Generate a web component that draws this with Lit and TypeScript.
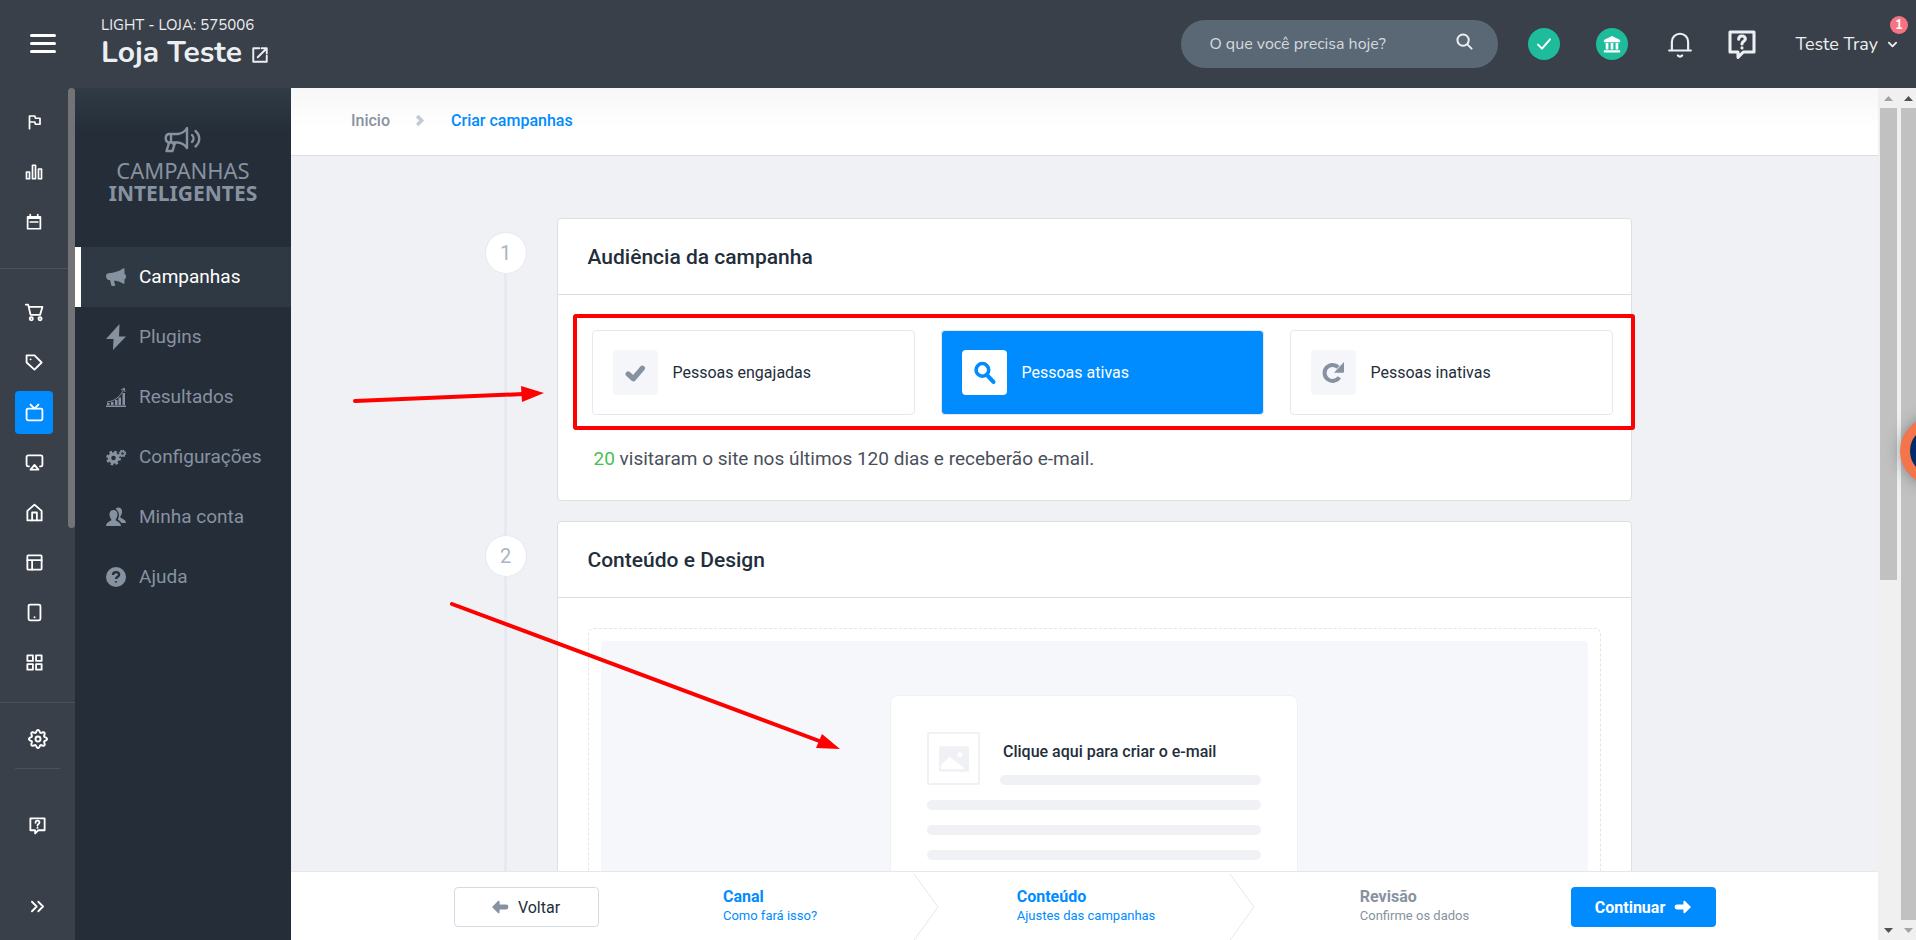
import { LitElement, html, svg, css, nothing, TemplateResult, SVGTemplateResult } from "lit";
import { customElement, property, state } from "lit/decorators.js";
import { classMap } from "lit/directives/class-map.js";

type Glyph = SVGTemplateResult;

// Outline of an eight-lobed cog, sampled around the centre of a 24-unit box.
const cog = Array.from({ length: 96 }, (_, i) => {
  const a = (i / 96) * Math.PI * 2;
  const r = 9.4 + 1.5 * Math.cos(8 * a);
  return `${(12 + r * Math.cos(a)).toFixed(2)},${(12 + r * Math.sin(a)).toFixed(2)}`;
}).join(" ");

const line: Record<string, Glyph> = {
  flag: svg`<path d="M6 21V4h7l1 3h6v8h-6l-1-3H6"/>`,
  chart: svg`<path d="M2 12h4v9H2zM10 3h4v18h-4zM18 8h4v13h-4z"/>`,
  calendar: svg`<path d="M3.500 5h17v16h-17zM4 7h16M7 2v3M17 2v3M7 12h10"/>`,
  cart: svg`<path d="M1 2h3l3 13h12l3-10H5"/><circle cx="8" cy="20" r="2"/><circle cx="19" cy="20" r="2"/>`,
  tag: svg`<path d="M2 3v9l10 9 9-9L12 3z"/><path d="M7 8h.1"/>`,
  tv: svg`<rect x="2" y="7" width="20" height="15" rx="2"/><path d="M7 2l5 5 5-5"/>`,
  airplay: svg`<path d="M5 17H4a2 2 0 0 1-2-2V5a2 2 0 0 1 2-2h16a2 2 0 0 1 2 2v10a2 2 0 0 1-2 2h-1"/><path d="M12 15l5 6H7z"/>`,
  home: svg`<path d="M3 10l9-8 9 8v12H3z"/><path d="M9 22V12h6v10"/>`,
  layout: svg`<rect x="3" y="3" width="18" height="18" rx="1"/><path d="M3 9h18M9 9v12"/>`,
  tablet: svg`<rect x="4.500" y="2" width="15" height="20" rx="2"/><path d="M12 18h.1"/>`,
  grid: svg`<path d="M3 3h7v7H3zM14 3h7v7h-7zM14 14h7v7h-7zM3 14h7v7H3z"/>`,
  gear: svg`<polygon points=${cog}/><circle cx="12" cy="12" r="3"/>`,
  help: svg`<path d="M3 3h18v15h-8l-4 4v-4H3z"/><path d="M9.500 8.500c0-3.500 5-3.200 5-.3 0 1.800-2.500 1.800-2.500 3.800M12 14.800v.2"/>`,
  expand: svg`<path d="M5 6l6 6-6 6M13 6l6 6-6 6"/>`,
  down: svg`<path d="M4 8l8 8 8-8"/>`,
  external: svg`<path d="M11 3H3v18h18v-8M14 3h7v7M21 3L9 15"/>`,
  search: svg`<circle cx="10" cy="10" r="8"/><path d="M16 16l6 6"/>`,
  bell: svg`<path d="M2 18h20M4.500 18V10a7.500 7.500 0 0 1 15 0v8"/><path d="M10 22.500c1 1.500 3 1.500 4 0"/>`,
  check: svg`<path d="M3 13l6 6L21 5"/>`,
};

const solid: Record<string, Glyph> = {
  megaphone: svg`<path d="M0 9c0-1.500 1-2.500 2.500-2.700C8 5.600 13 4.500 17 1.500c1-.7 1.500-.3 1.500.6V7c2 .3 2 5 0 5.300v3.500c0 .9-.6 1.300-1.500.7-2.500-1.600-5.500-2.600-8.500-3l-.3 1.500.9 2.800c.2.700-.2 1.300-.9 1.300H6.500c-.6 0-1-.3-1.200-.9L4 13H2.500C1 12.800 0 10.500 0 9z"/>`,
  bolt: svg`<path d="M13.500-3L0 12h7.500L7 23l13-13.500h-7z"/>`,
  results: svg`<path d="M0 18.500h20V20H0zM1 16h2.500v2H1zM5 15h2.500v3H5zM9 13h2.500v5H9zM12.500 10.500H15V18h-2.500zM16.500 6H19v12h-2.500z"/><path d="M1 15c8-1 13-5 17-13M15 3l3.200-2L19 5" fill="none" stroke="currentColor"/>`,
  gears: svg`<circle cx="7.500" cy="11" r="4" fill="none" stroke="currentColor" stroke-width="3.500"/><circle cx="7.500" cy="11" r="6.200" fill="none" stroke="currentColor" stroke-width="2.400" stroke-dasharray="2.600 2.270"/><circle cx="16.500" cy="6.500" r="2.100" fill="none" stroke="currentColor" stroke-width="1.600"/><circle cx="16.500" cy="6.500" r="3.200" fill="none" stroke="currentColor" stroke-width="1.200" stroke-dasharray="1.400 1.110"/>`,
  users: svg`<path d="M7.500 3c2.800 0 4.300 2 4 5-.1 1.500-.8 3-1.700 4v1.500c1.800 1 4.700 1.800 5.200 5.500H0c.4-3.700 3.400-4.500 5.200-5.500V12C4.300 11 3.600 9.500 3.500 8c-.3-3 1.200-5 4-5z"/><path d="M9.500 1.800C13-1 16.500 1 16 5.500c-.2 1.600-.8 2.700-1.600 3.600v1.700c2 1 5.200 1.700 5.600 5.200h-4.500c-.8-1.600-2.200-2.500-3.700-3.200 1.700-3.500 2-7.500-2.300-11z"/>`,
  question: svg`<circle cx="10" cy="10" r="10"/><path d="M7 8c0-4 6.200-3.700 6.200-.4 0 2.200-3.200 2.200-3.200 4.400M10 14.200v1.400" fill="none" stroke="#242d38" stroke-width="2.300"/>`,
  tick: svg`<path d="M3 11.500l5 4.500 8.500-10" fill="none" stroke="currentColor" stroke-width="5" stroke-linecap="round" stroke-linejoin="round"/>`,
  lens: svg`<circle cx="8" cy="7.500" r="6" fill="none" stroke="currentColor" stroke-width="3.400"/><path d="M12.500 12.500l6 6.500" stroke="currentColor" stroke-width="4" stroke-linecap="round"/>`,
  redo: svg`<path d="M15.500 14.500A7.600 7.600 0 1 1 14.500 5" fill="none" stroke="currentColor" stroke-width="3.800"/><path d="M20 0v9.500c0 .5-.3.800-.8.800H10.500z"/>`,
  left: svg`<path d="M0 10l7.500-7.500c1-.7 2 0 2 1V7h8a3 3 0 0 1 0 6h-8v3.500c0 1-1 1.700-2 1z"/>`,
  right: svg`<path d="M20 10l-7.500-7.500c-1-.7-2 0-2 1V7h-8a3 3 0 0 0 0 6h8v3.500c0 1 1 1.700 2 1z"/>`,
  chevron: svg`<path d="M4 2l8 8-8 8" fill="none" stroke="currentColor" stroke-width="6.500"/>`,
  image: svg`<path fill-rule="evenodd" d="M1 1.500h18a1 1 0 0 1 1 1v15a1 1 0 0 1-1 1H1a1 1 0 0 1-1-1v-15a1 1 0 0 1 1-1zM14 5.500a1.700 1.700 0 1 0 .1 0zM1.500 16.800h15v-1L7 8.500 1.500 14z"/>`,
  bank: svg`<path d="M10 1l9 4.500V8H1V5.500zM3 9h3v7H3zM8.500 9h3v7h-3zM14 9h3v7h-3zM1 17h18v2.500H1z"/>`,
};

@customElement("ui-icon")
class UiIcon extends LitElement {
  @property() name = "";
  @property({ type: Number }) size = 20;
  @property({ type: Number }) weight = 2;

  static styles = css`
    :host { display: inline-flex; flex: none; }
    svg { display: block; overflow: visible; }
  `;

  render() {
    const outlined = this.name in line;
    return outlined
      ? html`<svg aria-hidden="true" width=${this.size} height=${this.size} viewBox="0 0 24 24" fill="none"
          stroke="currentColor" stroke-width=${this.weight} stroke-linejoin="round" stroke-linecap="round">${line[this.name]}</svg>`
      : html`<svg aria-hidden="true" width=${this.size} height=${this.size} viewBox="0 0 20 20"
          fill="currentColor">${solid[this.name]}</svg>`;
  }
}

@customElement("top-bar")
class TopBar extends LitElement {
  static styles = css`
    :host {
      display: flex; align-items: center; height: 88px; flex: none;
      background: #394049; color: #eceff2;
      font-family: Nunito, "Open Sans", sans-serif;
    }
    button { border: 0; padding: 0; background: none; color: inherit; font: inherit; cursor: pointer; }
    a { color: inherit; text-decoration: none; }
    .burger { display: grid; gap: 5px; width: 26px; margin: 0 44px 2px 30px; }
    .burger span { height: 3px; border-radius: 2px; background: #fff; }
    .plan { font-size: 15px; line-height: 20px; }
    .store { display: flex; align-items: center; gap: 9px; font-size: 30px; line-height: 36px; font-weight: 700; }
    .store ui-icon { padding-top: 4px; }
    .id { flex: 1; padding-left: 1px; margin-top: -2px; }
    .search {
      display: flex; align-items: center; width: 317px; height: 48px; box-sizing: border-box;
      padding: 0 25px 0 28px; border-radius: 24px; background: #5a6876; margin-right: 30px;
    }
    .search input {
      flex: 1; min-width: 0; border: 0; outline: 0; padding: 0; background: none;
      color: #d5dade; font: 16px Nunito, "Open Sans", sans-serif;
    }
    .search input::placeholder { color: #d5dade; opacity: 1; }
    .dot {
      display: flex; align-items: center; justify-content: center; width: 32px; height: 32px;
      border-radius: 50%; background: #1fbc9c; color: #fff;
    }
    .dot + .dot { margin-left: 36px; }
    .bell { display: flex; margin-left: 39px; }
    .talk { display: flex; margin-left: 33px; }
    .user {
      display: flex; align-items: center; gap: 9px; position: relative; margin: 0 18px 0 37px;
      font-size: 18px;
    }
    .badge {
      position: absolute; right: -10px; top: -16px; width: 18px; height: 18px; border-radius: 50%;
      background: #f87284; color: #fff; font-weight: 700; font-size: 13px; line-height: 18px; text-align: center;
    }
  `;

  render() {
    return html`
      <button class="burger" aria-label="Menu"><span></span><span></span><span></span></button>
      <div class="id">
        <div class="plan">LIGHT - LOJA: 575006</div>
        <a class="store" href="#">Loja Teste <ui-icon name="external" size="18" weight="2.500"></ui-icon></a>
      </div>
      <form class="search" role="search">
        <input type="text" aria-label="Pesquisar" placeholder="O que você precisa hoje?" />
        <button type="button" aria-label="Buscar"><ui-icon name="search" size="17" weight="2.800"></ui-icon></button>
      </form>
      <button class="dot" aria-label="Status"><ui-icon name="check" size="16" weight="3"></ui-icon></button>
      <button class="dot" aria-label="Banco"><ui-icon name="bank" size="18"></ui-icon></button>
      <button class="bell" aria-label="Notificações"><ui-icon name="bell" size="26"></ui-icon></button>
      <button class="talk" aria-label="Suporte"><ui-icon name="help" size="32" weight="2.300"></ui-icon></button>
      <button class="user">Teste Tray <ui-icon name="down" size="11" weight="4"></ui-icon><span class="badge">1</span></button>
    `;
  }
}

@customElement("icon-rail")
class IconRail extends LitElement {
  static styles = css`
    :host { display: flex; flex-direction: column; width: 75px; flex: none; background: #394049; color: #fff; }
    .scroll { display: flex; border-bottom: 1px solid #455360; }
    .list { flex: 1; }
    .bar { width: 7px; height: 440px; border-radius: 4px; background: #727377; }
    .group { padding: 9px 0 21px; border-bottom: 1px solid #455360; }
    .group + .group { padding: 18px 0 15px; border: 0; }
    a { display: flex; align-items: center; justify-content: center; height: 50px; color: inherit; }
    a span { display: flex; align-items: center; justify-content: center; width: 38px; height: 43px; border-radius: 4px; }
    a.on span { background: #008cff; }
    .gear { padding: 11px 0 4px; margin: 0 15px; border-bottom: 1px solid #455360; }
    .help { padding: 31px 0; }
  `;

  private item(name: string, on = false, size = 19) {
    return html`<a href="#" aria-label=${name} class=${classMap({ on })}><span><ui-icon name=${name} size=${size} weight="2.300"></ui-icon></span></a>`;
  }

  render() {
    return html`
      <div class="scroll">
        <nav class="list">
          <div class="group">${["flag", "chart", "calendar"].map((n) => this.item(n, false, 18))}</div>
          <div class="group">
            ${["cart", "tag", "tv", "airplay", "home", "layout", "tablet", "grid"].map((n) => this.item(n, n === "tv"))}
          </div>
        </nav>
        <div class="bar"></div>
      </div>
      <div class="gear">${this.item("gear", false, 20)}</div>
      <div class="help">${this.item("help")}</div>
      ${this.item("expand")}
    `;
  }
}

@customElement("campaign-menu")
class CampaignMenu extends LitElement {
  static styles = css`
    :host {
      display: block; width: 216px; flex: none; color: #8792a1;
      background: linear-gradient(#303b46, #242d38 45px);
      font: 19px/24px Roboto, sans-serif;
    }
    .logo {
      display: flex; flex-direction: column; align-items: center; height: 159px; box-sizing: border-box;
      padding-top: 38px; font: 22px/23px "Noto Sans", sans-serif;
    }
    .logo svg { display: block; margin-bottom: 6px; }
    .logo strong { font-size: 21px; font-weight: 700; }
    a {
      display: flex; align-items: center; gap: 13px; height: 60px; box-sizing: border-box;
      padding: 0 0 0 25px; border-left: 6px solid transparent; color: inherit; text-decoration: none;
    }
    a.on { background: #2f3944; border-color: #fff; color: #fff; }
    a ui-icon { color: #8792a1; }
  `;

  render() {
    const items = [
      ["megaphone", "Campanhas"], ["bolt", "Plugins"], ["results", "Resultados"],
      ["gears", "Configurações"], ["users", "Minha conta"], ["question", "Ajuda"],
    ];
    return html`
      <div class="logo">
        <svg aria-hidden="true" width="38" height="27" viewBox="0 0 38 27" fill="none" stroke="currentColor" stroke-width="2.400" stroke-linejoin="round">
          <path d="M7 8h7c4-.5 7-2.500 9-6v20c-2-3-5-5-9-5.500H7M4.500 8h2.500v8.500H4.500c-3.700-1-3.700-7.500 0-8.500zM5 17l-2.500 8h6L11 17M9 17l1.500 3.500"/>
          <path d="M28 9c2 2 2 5 0 7M31.500 5c5 4.500 5 11 0 15.500" stroke-linecap="round"/>
        </svg>
        <span>CAMPANHAS</span><strong>INTELIGENTES</strong>
      </div>
      <nav>
        ${items.map(([icon, label], i) => html`<a href="#" class=${classMap({ on: i === 0 })}><ui-icon name=${icon}></ui-icon>${label}</a>`)}
      </nav>
    `;
  }
}

@customElement("scroll-track")
class ScrollTrack extends LitElement {
  static styles = css`
    :host { display: flex; flex-direction: column; align-items: center; background: #f0f0f0; box-sizing: border-box; padding: 8px 0 7px; }
    .thumb { width: 100%; background: #c1c1c1; }
    .short { height: 472px; margin-bottom: auto; }
    .long { flex: 1; margin-bottom: 8px; }
    svg { display: block; flex: none; }
    .top { margin-bottom: 7px; }
  `;
  @property({ type: Boolean }) short = false;

  render() {
    return html`
      <svg class="top" width="9" height="5" aria-hidden="true"><path d="M0 5l4.500-5L9 5z" fill=${this.short ? "#a3a3a3" : "#505050"} /></svg>
      <div class=${classMap({ thumb: true, short: this.short, long: !this.short })}></div>
      <svg width="9" height="5" aria-hidden="true"><path d="M0 0l4.500 5L9 0z" fill=${this.short ? "#505050" : "#a3a3a3"} /></svg>
    `;
  }
}

@customElement("step-card")
class StepCard extends LitElement {
  @property({ type: Number }) number = 1;
  @property() heading = "";

  static styles = css`
    :host { display: flex; gap: 30px; }
    .marker { display: flex; flex-direction: column; align-items: center; width: 42px; flex: none; }
    .lead { width: 3px; height: 14px; background: #e6e9f1; }
    .lead.none { background: none; }
    .circle {
      display: flex; align-items: center; justify-content: center; width: 42px; height: 42px;
      box-sizing: border-box; border: 1px solid #e6e9f1; border-radius: 50%; background: #fff; color: #a9b5c4; font-size: 20px;
    }
    .rest { flex: 1; width: 3px; background: #e6e9f1; }
    section { flex: 1; min-width: 0; margin-bottom: 20px; border: 1px solid #dedfe1; border-radius: 4px; background: #fff; }
    h2 {
      margin: 0; padding: 1px 30px 0; font-size: 21px; line-height: 74px; font-weight: 500; color: #232e3b;
      border-bottom: 1px solid #dcdde0;
    }
  `;

  render() {
    return html`
      <div class="marker">
        <div class=${classMap({ lead: true, none: this.number === 1 })}></div>
        <div class="circle">${this.number}</div>
        <div class="rest"></div>
      </div>
      <section><h2>${this.heading}</h2><slot></slot></section>
    `;
  }
}

@customElement("wizard-footer")
class WizardFooter extends LitElement {
  static styles = css`
    :host {
      display: flex; justify-content: center; height: 69px; flex: none; box-sizing: border-box;
      border-top: 1px solid #e4e7f0; background: #fff; padding: 2px 20px 0;
    }
    .inner { display: flex; align-items: center; width: 100%; max-width: 1262px; }
    button {
      display: flex; align-items: center; justify-content: center; gap: 10px; width: 145px; height: 40px;
      border-radius: 4px; font: 16px Roboto, sans-serif; cursor: pointer; flex: none;
    }
    .back { border: 1px solid #d5dbe5; background: #fff; color: #232e3b; }
    .back ui-icon { color: #8792a1; }
    .next { border: 0; background: #008cff; color: #fff; font-weight: 700; }
    ol { display: flex; flex: 1; margin: 0 0 0 24px; padding: 0; list-style: none; align-self: stretch; }
    li { display: flex; align-items: stretch; flex: 1; color: #008cff; }
    li.todo { color: #8792a1; }
    .text { flex: 1; display: flex; flex-direction: column; align-items: center; justify-content: center; padding: 0 0 2px 4px; }
    .pair { display: grid; gap: 1px; font-size: 13px; line-height: 18px; }
    strong { font-size: 16px; line-height: 19px; }
    svg { display: block; }
  `;

  render() {
    const steps = [["Canal", "Como fará isso?"], ["Conteúdo", "Ajustes das campanhas"], ["Revisão", "Confirme os dados"]];
    return html`<div class="inner">
      <button class="back"><ui-icon name="left" size="16"></ui-icon>Voltar</button>
      <ol>
        ${steps.map(([name, note], i) => html`<li class=${classMap({ todo: i === 2 })}>
          <div class="text"><div class="pair"><strong>${name}</strong><span>${note}</span></div></div>
          ${i < 2 ? html`<svg width="25" height="66" aria-hidden="true"><path d="M0 0l24 33L0 66" fill="none" stroke="#e4e7f0"/></svg>` : nothing}
        </li>`)}
      </ol>
      <button class="next">Continuar <ui-icon name="right" size="16"></ui-icon></button>
    </div>`;
  }
}

@customElement("app-root")
class AppRoot extends LitElement {
  @state() private audience = 1;

  static styles = css`
    :host {
      display: flex; flex-direction: column; height: 100vh; position: relative; overflow: hidden;
      font: 16px Roboto, sans-serif; color: #232e3b;
    }
    .body { display: flex; flex: 1; min-height: 0; }
    main { display: flex; flex-direction: column; flex: 1; min-width: 0; background: #f0f1f5; }
    .crumbs {
      display: flex; align-items: center; gap: 25px; height: 68px; flex: none; box-sizing: border-box;
      padding: 0 60px 2px; border-bottom: 1px solid #dcdfe0; background: linear-gradient(#f7f7f7, #fff 40px);
      font-weight: 500;
    }
    .crumbs a { color: #8792a1; text-decoration: none; }
    .crumbs ui-icon { color: #c3cad4; }
    .crumbs .here { color: #008cff; }
    .content { flex: 1; min-height: 0; overflow: hidden; padding: 62px 0 0; }
    .steps { max-width: 1200px; margin: 0 auto; box-sizing: border-box; padding: 0 53px 0 0; }
    fieldset { display: grid; grid-template-columns: repeat(3, 1fr); gap: 26px; border: 0; margin: 35px 18px 32px 34px; padding: 0; }
    .option {
      display: flex; align-items: center; gap: 15px; height: 85px; box-sizing: border-box; padding: 0 20px;
      border: 1px solid #e6e8f1; border-radius: 4px; position: relative; cursor: pointer;
    }
    .option input { position: absolute; inset: 0; margin: 0; opacity: 0; }
    .tile {
      display: flex; align-items: center; justify-content: center; width: 45px; height: 45px;
      border-radius: 4px; background: #f5f6fa; color: #8792a1;
    }
    .option.on { background: #008cff; color: #fff; }
    .option.on .tile { background: #fff; color: #008cff; }
    .reach { margin: 0 36px 29px; font-size: 19px; line-height: 24px; color: #4a4f5c; }
    .reach b { font-weight: 400; color: #4bc04f; }
    .design { margin: 30px; padding: 12px; border: 1px dashed #e2e5ee; border-radius: 6px; }
    .stage { display: flex; justify-content: center; padding: 54px 0; border-radius: 4px; background: #f5f7fb; }
    .mail {
      display: grid; gap: 15px; width: 408px; padding: 36px 36px 60px; border: 1px solid #f0f1f5; border-radius: 8px;
      background: #fff; box-sizing: border-box; font: 500 16px/20px Roboto, sans-serif; color: #232e3b; text-align: left; cursor: pointer;
    }
    .top { display: flex; gap: 20px; }
    .thumb {
      display: flex; align-items: center; justify-content: center; width: 53px; height: 53px; box-sizing: border-box;
      border: 2px solid #f0f1f5; border-radius: 2px; color: #f0f1f5; flex: none;
    }
    .words { display: flex; flex-direction: column; justify-content: space-between; flex: 1; padding-top: 10px; }
    .words b { font-weight: 500; padding-left: 3px; }
    .stroke { display: block; height: 10px; border-radius: 5px; background: #f0f1f5; }
    .inner-track { width: 22px; padding-left: 2px; padding-right: 3px; }
    .outer-track { width: 16px; padding-left: 1px; }
    .bubble {
      position: absolute; right: -52px; top: 417px; width: 68px; height: 68px; box-sizing: border-box;
      border: 10px solid #f4744c; border-radius: 50%; background: #032b69; box-shadow: 0 0 14px rgba(60, 70, 80, .5);
    }
    .notes { position: absolute; left: 0; top: 0; pointer-events: none; }
  `;

  render(): TemplateResult {
    const options = [["tick", "Pessoas engajadas"], ["lens", "Pessoas ativas"], ["redo", "Pessoas inativas"]];
    return html`
      <top-bar></top-bar>
      <div class="body">
        <icon-rail></icon-rail>
        <campaign-menu></campaign-menu>
        <main>
          <nav class="crumbs">
            <a href="#">Inicio</a><ui-icon name="chevron" size="11"></ui-icon><a class="here" href="#">Criar campanhas</a>
          </nav>
          <div class="content"><div class="steps">
            <step-card number="1" heading="Audiência da campanha">
              <fieldset aria-label="Audiência">
                ${options.map(([icon, label], i) => html`
                  <label class=${classMap({ option: true, on: i === this.audience })}>
                    <input type="radio" name="audience" .checked=${i === this.audience} @change=${() => (this.audience = i)} />
                    <span class="tile"><ui-icon name=${icon} size="21"></ui-icon></span>${label}
                  </label>`)}
              </fieldset>
              <p class="reach"><b>20</b> visitaram o site nos últimos 120 dias e receberão e-mail.</p>
            </step-card>
            <step-card number="2" heading="Conteúdo e Design">
              <div class="design"><div class="stage">
                <button class="mail">
                  <span class="top">
                    <span class="thumb"><ui-icon name="image" size="30"></ui-icon></span>
                    <span class="words"><b>Clique aqui para criar o e-mail</b><span class="stroke"></span></span>
                  </span>
                  <span class="stroke"></span><span class="stroke"></span><span class="stroke"></span>
                  <span class="stroke"></span><span class="stroke"></span>
                </button>
              </div></div>
            </step-card>
          </div></div>
          <wizard-footer></wizard-footer>
        </main>
        <scroll-track class="inner-track" short></scroll-track>
        <scroll-track class="outer-track"></scroll-track>
      </div>
      <div class="bubble"></div>
      <svg class="notes" width="1916" height="940" aria-hidden="true">
        <g fill="none" stroke="#fe0000" stroke-width="4" stroke-linecap="round">
          <rect x="575" y="316" width="1058" height="112" rx="1"/>
          <path d="M355 401L524 394M452 604L822 742"/>
        </g>
        <path fill="#fe0000" d="M521 386l23 7-22 9zM822 734l18 15-24-1z"/>
      </svg>
    `;
  }
}
